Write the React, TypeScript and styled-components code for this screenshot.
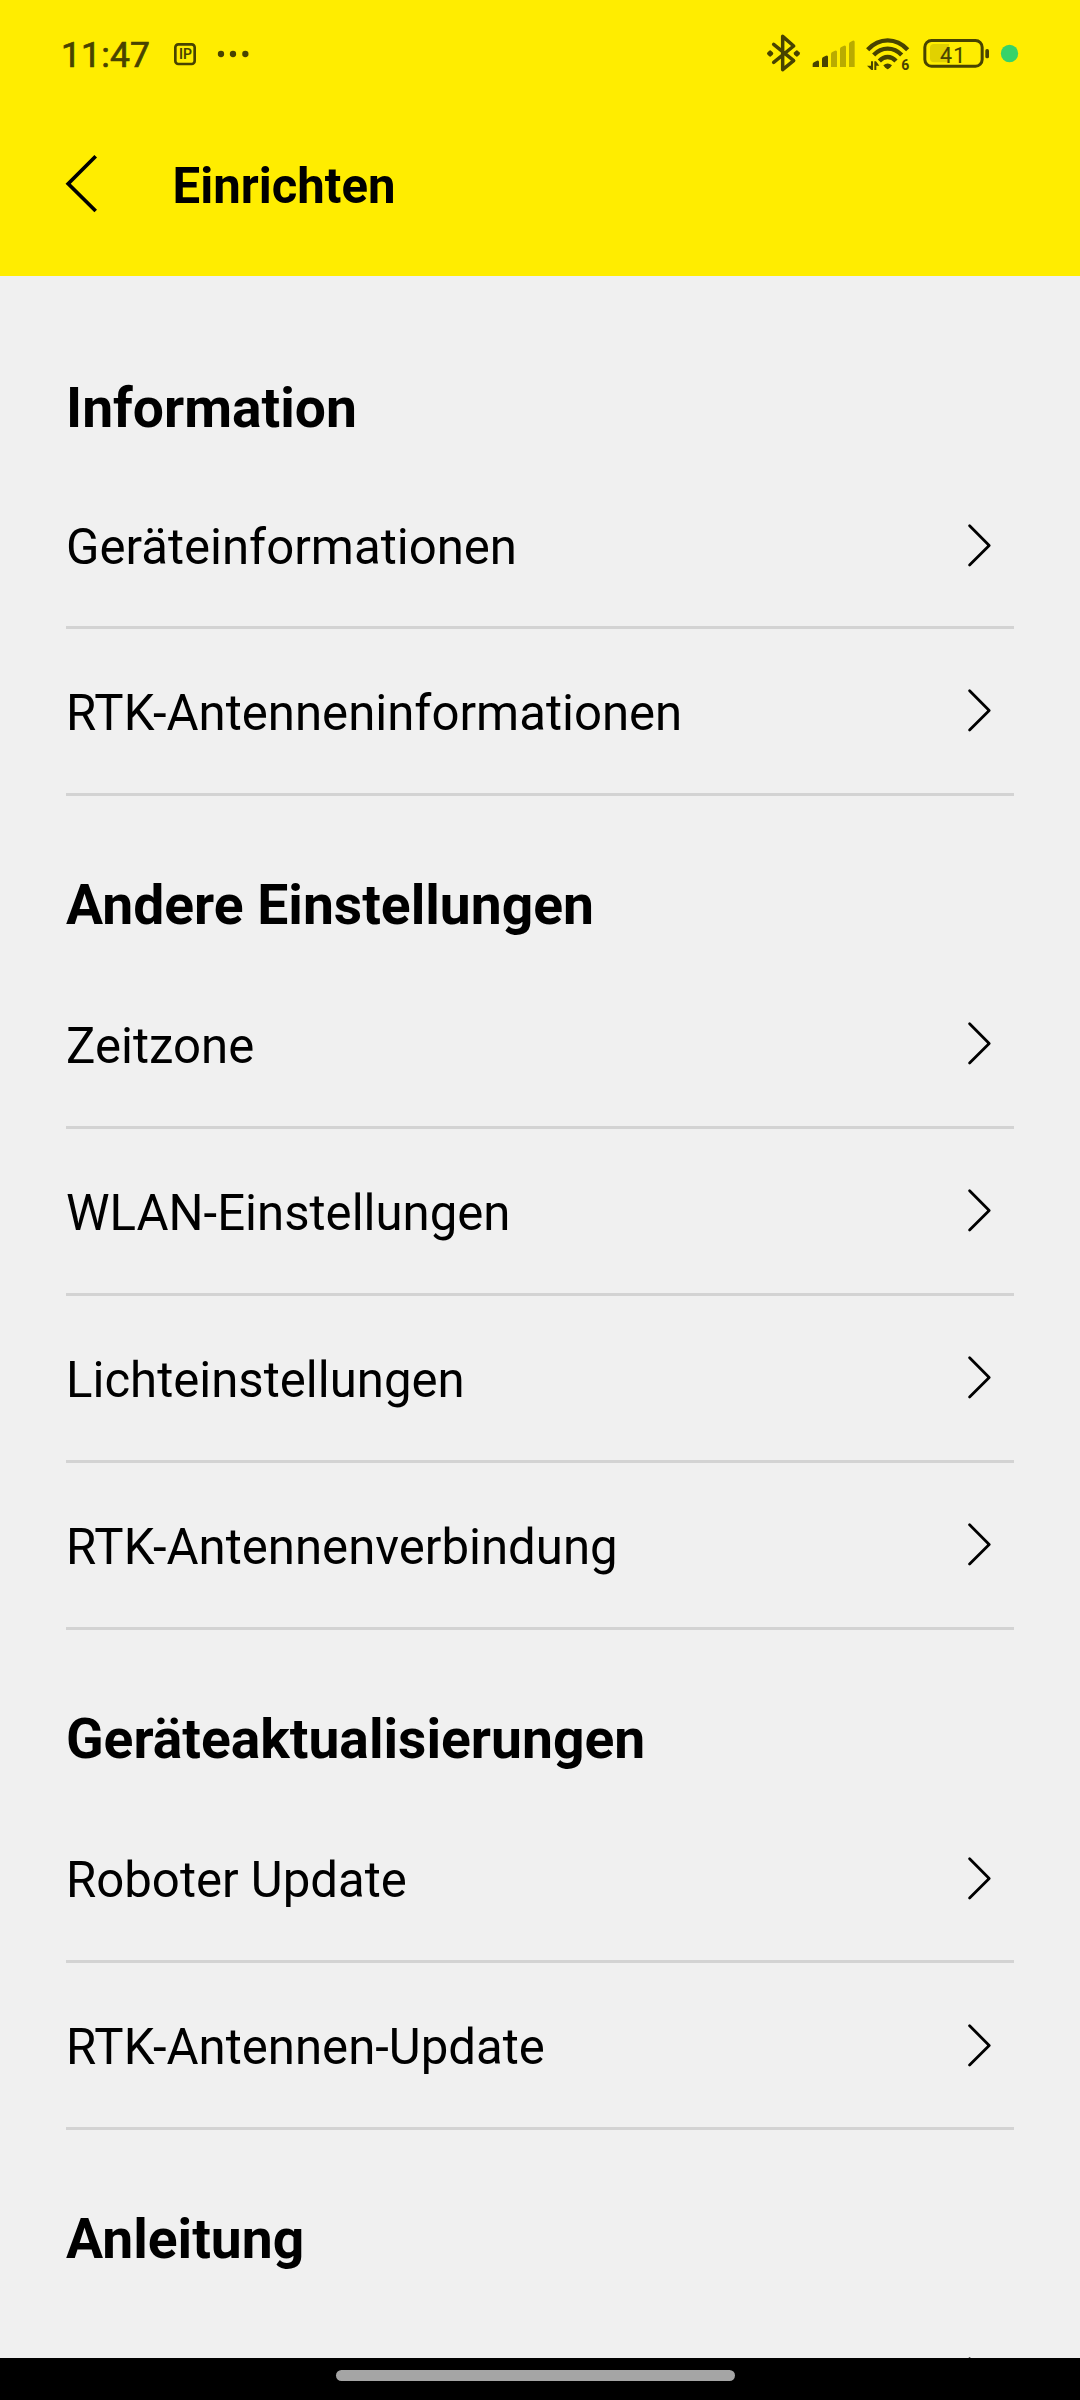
import React from "react";
import styled, { createGlobalStyle } from "styled-components";

const INK = "#484300";
const FAINT = "#b9ab00";

const GlobalStyle = createGlobalStyle`
  * { box-sizing: border-box; }
  body { margin: 0; background: #f0f0f0; font-family: Roboto, "Noto Sans", sans-serif; color: #000; }
`;

const Screen = styled.div`
  width: 1080px;
  height: 2400px;
  display: flex;
  flex-direction: column;
  overflow: hidden;
  background: #f0f0f0;
`;

const StatusBar = styled.div`
  height: 108px;
  flex: none;
  display: flex;
  align-items: flex-start;
  justify-content: space-between;
  padding: 20px 40px 0 61px;
  background: #ffed00;
`;

const StatusGroup = styled.div`
  display: flex;
  align-items: flex-start;
`;

const Clock = styled.span`
  width: 109px;
  font-size: 35.4px;
  font-weight: 400;
  line-height: 70px;
  letter-spacing: 0.2px;
  color: ${INK};
  -webkit-text-stroke: 0.7px ${INK};
`;

const Glyph = styled.svg`
  display: block;
  flex: none;
`;

const AppBar = styled.header`
  height: 168px;
  flex: none;
  display: flex;
  padding: 45px 60px 0 60px;
  background: #ffed00;
`;

const BackButton = styled.button`
  width: 112.600px;
  height: 62px;
  padding: 0;
  border: 0;
  background: none;
  display: flex;
`;

const Title = styled.h1`
  margin: 0;
  font-size: 49.1px;
  font-weight: 700;
  line-height: 66px;
`;

const Content = styled.main`
  flex: 1;
  min-height: 0;
  overflow: hidden;
  padding: 23px 66px 0;
`;

const Heading = styled.h2<{ $height: number }>`
  margin: 0;
  height: ${(p) => p.$height}px;
  padding-top: 52px;
  font-size: 55.2px;
  font-weight: 700;
  line-height: 114px;
`;

const Row = styled.div<{ $height: number }>`
  height: ${(p) => p.$height}px;
  display: flex;
  justify-content: space-between;
  padding-right: 18px;
  border-bottom: 3px solid #d3d3d3;
`;

const Label = styled.span`
  font-size: 49.13px;
  line-height: 168px;
  white-space: nowrap;
`;

const Arrow = styled.svg<{ $top: number }>`
  display: block;
  flex: none;
  margin-top: ${(p) => p.$top}px;
`;

const NavBar = styled.footer`
  height: 42px;
  flex: none;
  display: flex;
  justify-content: center;
  padding: 12px 9px 0 0;
  background: #000;
`;

const HomePill = styled.div`
  width: 399px;
  height: 11px;
  border-radius: 6px;
  background: #a5a5a5;
`;

interface Section {
  title: string;
  headingHeight: number;
  arrowTop: number;
  rows: { label: string; height?: number; arrowTop?: number }[];
}

const sections: Section[] = [
  {
    title: "Information",
    headingHeight: 164,
    arrowTop: 59,
    rows: [{ label: "Geräteinformationen", height: 166, arrowTop: 60 }, { label: "RTK-Antenneninformationen" }],
  },
  {
    title: "Andere Einstellungen",
    headingHeight: 166,
    arrowTop: 59,
    rows: [
      { label: "Zeitzone" },
      { label: "WLAN-Einstellungen" },
      { label: "Lichteinstellungen" },
      { label: "RTK-Antennenverbindung" },
    ],
  },
  {
    title: "Geräteaktualisierungen",
    headingHeight: 166,
    arrowTop: 60,
    rows: [{ label: "Roboter Update" }, { label: "RTK-Antennen-Update" }],
  },
  { title: "Anleitung", headingHeight: 166, arrowTop: 60, rows: [{ label: "" }] },
];

function NotificationIcons() {
  return (
    <Glyph width="90" height="70" viewBox="390 0 270 210">
      <rect x="406" y="73" width="58" height="59" rx="9" fill="none" stroke={INK} strokeWidth="8" />
      <text x="417" y="117" fontSize="42" fontWeight="600" fill={INK}>IP</text>
      <circle cx="543" cy="102" r="9.500" fill={INK} />
      <circle cx="579" cy="102" r="9.500" fill={INK} />
      <circle cx="616" cy="102" r="9.500" fill={INK} />
    </Glyph>
  );
}

function RadioIcons() {
  return (
    <Glyph width="170" height="70" viewBox="0 0 510 210">
      <path
        d="M71 73 L131 122 L98 149 V49 L131 78 L71 127"
        fill="none" stroke={INK} strokeWidth="10.500" strokeLinecap="round" strokeLinejoin="round"
      />
      <rect x="52.500" y="92.500" width="16" height="16" rx="5" transform="rotate(45 60.5 100.5)" fill={INK} />
      <rect x="132.500" y="92.500" width="16" height="16" rx="5" transform="rotate(45 140.5 100.5)" fill={INK} />

      <path d="M188 141 V133 Q188 129 192 127 L201 122 Q207 120 207 126 V141 Z" fill={INK} />
      <path d="M216 141 V117 Q216 113 220 111 L228 107 Q234 105 234 111 V141 Z" fill={INK} />
      <path d="M243 141 V102 Q243 98 247 96 L255 92 Q261 90 261 96 V141 Z" fill={FAINT} />
      <path d="M270 141 V87 Q270 83 274 81 L282 77 Q288 75 288 81 V141 Z" fill={FAINT} />
      <path d="M297 141 V72 Q297 68 301 66 L308 62 Q314 60 314 66 V141 Z" fill={FAINT} />

      <g fill="none" stroke={INK} strokeWidth="13">
        <path d="M353 89 Q379 61 413 61 Q447 61 473 89" />
        <path d="M371 105 Q389 86 413 86 Q437 86 455 105" />
        <path d="M388 123 Q399 111 413 111 Q427 111 438 123" />
      </g>
      <path d="M400 136 Q413 125 426 136 Q422 142 415 147 Q413 148 411 147 Q404 142 400 136 Z" fill={INK} />
      <path d="M363 124 H369 V150 H364 L351 137 H363 Z" fill={INK} />
      <path d="M373 124 V150 H379 V137 H388 L378 124 Z" fill={INK} />
      <text x="454" y="150" fontSize="42" fontWeight="700" fill={INK}>6</text>
    </Glyph>
  );
}

function BatteryIcon() {
  return (
    <Glyph width="120" height="70" viewBox="90 0 360 210">
      <rect x="104.500" y="61.500" width="172" height="77" rx="20" fill="none" stroke={INK} strokeWidth="9" />
      <path d="M177 72 H132 Q120 72 120 84 V115 Q120 127 132 127 H177 Z" fill="#e1d100" />
      <rect x="286" y="87" width="11" height="28" rx="5" fill={INK} />
      <text x="150" y="129" fontSize="64" letterSpacing="4" fill={INK} stroke={INK} strokeWidth="0.500">41</text>
      <circle cx="358.500" cy="100.500" r="26" fill="#36d369" />
    </Glyph>
  );
}

export default function App() {
  return (
    <>
      <GlobalStyle />
      <Screen>
        <StatusBar>
          <StatusGroup>
            <Clock>11:47</Clock>
            <NotificationIcons />
          </StatusGroup>
          <StatusGroup>
            <RadioIcons />
            <BatteryIcon />
          </StatusGroup>
        </StatusBar>
        <AppBar>
          <BackButton aria-label="Zurück">
            <Glyph width="40" height="62" viewBox="0 0 40 62">
              <path d="M35.700 3.300 L8.200 30.700 L35.700 58" fill="none" stroke="#000" strokeWidth="3.700" />
            </Glyph>
          </BackButton>
          <Title>Einrichten</Title>
        </AppBar>
        <Content>
          {sections.map((section) => (
            <section key={section.title}>
              <Heading $height={section.headingHeight}>{section.title}</Heading>
              {section.rows.map((row) => (
                <Row key={row.label} $height={row.height ?? 167}>
                  <Label>{row.label}</Label>
                  <Arrow $top={row.arrowTop ?? section.arrowTop} width="30" height="45" viewBox="0 0 30 45">
                    <path
                      d="M3.600 2.800 L23.200 22.400 L3.600 42"
                      fill="none" stroke="#000" strokeWidth="2.800" strokeLinecap="round" strokeLinejoin="round"
                    />
                  </Arrow>
                </Row>
              ))}
            </section>
          ))}
        </Content>
        <NavBar>
          <HomePill />
        </NavBar>
      </Screen>
    </>
  );
}
